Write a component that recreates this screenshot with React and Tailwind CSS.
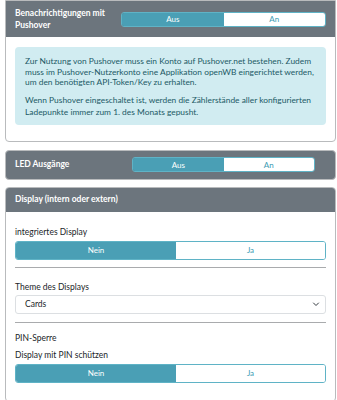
import React from 'react';

const font = { fontFamily: '"Lato", "Noto Sans", sans-serif' };

const Toggle = ({ left, right, className = '', h = 'h-[15px]', split = 'grid-cols-2' }) => (
    <div className={`grid ${split} ${h} text-[8px] rounded-[3px] overflow-hidden border border-[#5fb3c6] ${className}`}>
        <div className="bg-[#4a9fb5] text-white flex items-center justify-center">{left}</div>
        <div className="bg-white text-[#3a9bb3] flex items-center justify-center">{right}</div>
    </div>
);

const App = () => {
    return (
        <div className="w-[337px] h-[400px] bg-white overflow-hidden pl-[5px] pr-[1px]" style={font}>
            {/* Pushover */}
            <div className="border border-[#b9bbbd] rounded-b-[4px] overflow-hidden">
                <div className="bg-[#6c757d] h-[36px] flex items-center pl-[9px] pr-[9px]">
                    <div className="w-[106px] text-white font-bold text-[8.5px] leading-[12px]">Benachrichtigungen mit Pushover</div>
                    <Toggle left="Aus" right="An" className="flex-1" />
                </div>
                <div className="px-[9px] pt-[10px] pb-[16px]">
                    <div className="bg-[#d1ecf1] rounded-[4px] pl-[10px] pr-[8px] pt-[9px] pb-[7px] text-[#1c5a66] text-[8.4px] leading-[10.5px]">
                        <p>Zur Nutzung von Pushover muss ein Konto auf Pushover.net bestehen. Zudem muss im Pushover-Nutzerkonto eine Applikation openWB eingerichtet werden, um den benötigten API-Token/Key zu erhalten.</p>
                        <p className="mt-[6px] leading-[12px]">Wenn Pushover eingeschaltet ist, werden die Zählerstände aller konfigurierten Ladepunkte immer zum 1. des Monats gepusht.</p>
                    </div>
                </div>
            </div>

            {/* LED */}
            <div className="mt-[8px] bg-[#6c757d] border border-[#b9bbbd] rounded-[4px] h-[30px] flex items-center pl-[9px] pr-[20px]">
                <div className="w-[117px] text-white font-bold text-[8.5px]">LED Ausgänge</div>
                <Toggle left="Aus" right="An" className="flex-1" />
            </div>

            {/* Display */}
            <div className="mt-[7px] border border-[#b9bbbd] rounded-[4px] overflow-hidden">
                <div className="bg-[#6c757d] h-[24px] flex items-center pl-[9px] text-white font-bold text-[8.5px]">
                    Display (intern oder extern)
                </div>
                <div className="px-[9px] text-[#212529] text-[8.5px]">
                    <div className="pt-[14px] leading-[12px]">integriertes Display</div>
                    <Toggle left="Nein" right="Ja" h="h-[19px]" className="mt-[3px] grid-cols-[160px_1fr]" split="" />
                    <div className="mt-[7px] border-t border-[#a9abad]" />
                    <div className="pt-[13px] leading-[12px]">Theme des Displays</div>
                    <div className="mt-[2px] h-[19px] border border-[#dcdfe2] rounded-[3px] flex items-center justify-between pl-[9px] pr-[5px]">
                        <span>Cards</span>
                        <svg width="8" height="8" viewBox="0 0 16 16" fill="none" stroke="#343a40" strokeWidth="2" strokeLinecap="round" strokeLinejoin="round">
                            <path d="M3 6l5 5 5-5" />
                        </svg>
                    </div>
                    <div className="mt-[8px] border-t border-[#a9abad]" />
                    <div className="pt-[9px] leading-[12px]">PIN-Sperre</div>
                    <div className="pt-[5px] leading-[12px]">Display mit PIN schützen</div>
                    <Toggle left="Nein" right="Ja" h="h-[19px]" className="mt-[3px] grid-cols-[160px_1fr]" split="" />
                    <div className="h-[18px]" />
                </div>
            </div>
        </div>
    );
};

export default App;
